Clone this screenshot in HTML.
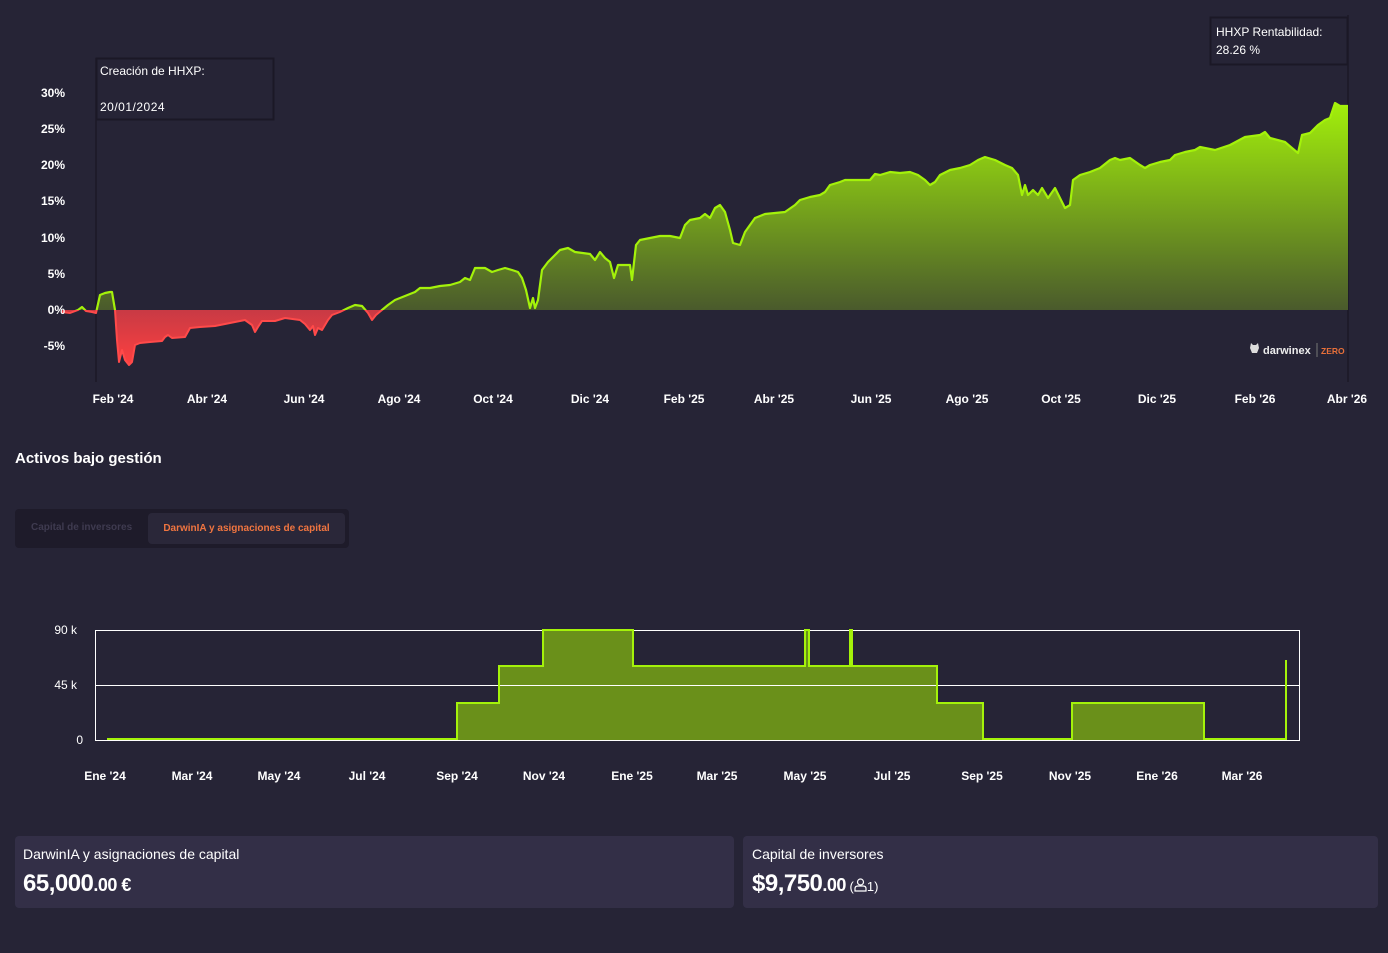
<!DOCTYPE html>
<html><head><meta charset="utf-8"><style>
html,body{margin:0;padding:0;background:#262436;width:1388px;height:953px;overflow:hidden;font-family:"Liberation Sans",sans-serif;color:#fff}
.ax{font-weight:bold;font-size:12px;fill:#fff;font-family:"Liberation Sans",sans-serif}
.t{position:absolute}
</style></head><body>
<svg width="1388" height="430" style="position:absolute;left:0;top:0">
<defs>
<linearGradient id="g" x1="0" y1="100" x2="0" y2="310" gradientUnits="userSpaceOnUse"><stop offset="0" stop-color="#a4f20a"/><stop offset="1" stop-color="#4a5a2c"/></linearGradient>
<linearGradient id="r" x1="0" y1="310" x2="0" y2="366" gradientUnits="userSpaceOnUse"><stop offset="0" stop-color="#c83a44"/><stop offset="1" stop-color="#ff4040"/></linearGradient>
<clipPath id="up"><rect x="0" y="0" width="1388" height="310"/></clipPath>
<clipPath id="dn"><rect x="0" y="310" width="1388" height="100"/></clipPath>
<path id="a" d="M62,312 L70,313 78,310 82,307 86,311 92,312 96,313 100,295 105,293 110,292 112,292 115,310 117,340 119,362 122,350 125,360 129,365 132,362 135,345 140,343 150,342 162,341 165,337 168,335 172,338 185,337 190,328 200,327 215,326 230,323 245,320 252,325 255,332 258,327 262,321 275,321 285,318 300,320 305,324 310,330 313,326 315,335 318,328 322,330 328,320 332,315 340,312 348,308 355,305 362,306 368,313 372,320 376,315 382,310 388,305 395,300 405,296 415,292 420,288 430,288 440,286 450,285 460,282 465,278 470,280 475,268 485,268 492,272 498,270 505,268 512,270 518,272 522,278 526,290 530,308 533,298 535,308 538,300 542,270 548,262 555,255 560,250 568,248 575,252 590,254 595,260 600,252 605,258 610,262 614,278 618,265 625,265 630,265 632,280 636,245 640,240 650,238 660,236 670,236 680,238 685,225 690,220 700,218 705,214 710,218 715,208 720,205 725,212 730,230 733,243 740,245 745,232 750,225 755,218 765,214 775,213 785,212 795,205 800,200 810,197 820,195 825,192 830,185 840,182 845,180 870,180 875,174 880,175 890,172 900,173 910,172 918,175 925,180 930,185 935,182 940,175 950,170 960,168 970,165 978,160 985,157 995,160 1005,165 1012,168 1018,175 1022,195 1025,185 1028,195 1033,190 1038,195 1042,188 1048,198 1055,188 1060,198 1065,208 1070,205 1073,180 1080,175 1090,172 1100,168 1110,160 1115,158 1120,160 1130,158 1140,165 1145,168 1150,165 1160,162 1170,160 1175,155 1185,152 1195,150 1200,147 1215,150 1230,145 1245,137 1260,135 1265,132 1270,138 1285,142 1292,148 1298,153 1302,135 1310,133 1318,125 1325,120 1330,118 1335,103 1340,106 1348,106"/>
</defs>
<line x1="96" y1="58" x2="96" y2="382" stroke="#1b1826" stroke-width="1.5"/>
<line x1="1348" y1="15" x2="1348" y2="382" stroke="#1b1826" stroke-width="1.5"/>
<path clip-path="url(#up)" fill="url(#g)" d="M62,310 L62,312 70,313 78,310 82,307 86,311 92,312 96,313 100,295 105,293 110,292 112,292 115,310 340,312 348,308 355,305 362,306 368,313 376,315 382,310 388,305 395,300 405,296 415,292 420,288 430,288 440,286 450,285 460,282 465,278 470,280 475,268 485,268 492,272 498,270 505,268 512,270 518,272 522,278 526,290 530,308 533,298 535,308 538,300 542,270 548,262 555,255 560,250 568,248 575,252 590,254 595,260 600,252 605,258 610,262 614,278 618,265 625,265 630,265 632,280 636,245 640,240 650,238 660,236 670,236 680,238 685,225 690,220 700,218 705,214 710,218 715,208 720,205 725,212 730,230 733,243 740,245 745,232 750,225 755,218 765,214 775,213 785,212 795,205 800,200 810,197 820,195 825,192 830,185 840,182 845,180 870,180 875,174 880,175 890,172 900,173 910,172 918,175 925,180 930,185 935,182 940,175 950,170 960,168 970,165 978,160 985,157 995,160 1005,165 1012,168 1018,175 1022,195 1025,185 1028,195 1033,190 1038,195 1042,188 1048,198 1055,188 1060,198 1065,208 1070,205 1073,180 1080,175 1090,172 1100,168 1110,160 1115,158 1120,160 1130,158 1140,165 1145,168 1150,165 1160,162 1170,160 1175,155 1185,152 1195,150 1200,147 1215,150 1230,145 1245,137 1260,135 1265,132 1270,138 1285,142 1292,148 1298,153 1302,135 1310,133 1318,125 1325,120 1330,118 1335,103 1340,106 1348,106 1348,310 Z"/>
<path clip-path="url(#dn)" fill="url(#r)" d="M62,310 L62,312 70,313 78,310 82,307 86,311 92,312 96,313 100,295 105,293 110,292 112,292 115,310 117,340 119,362 122,350 125,360 129,365 132,362 135,345 140,343 150,342 162,341 165,337 168,335 172,338 185,337 190,328 200,327 215,326 230,323 245,320 252,325 255,332 258,327 262,321 275,321 285,318 300,320 305,324 310,330 313,326 315,335 318,328 322,330 328,320 332,315 340,312 348,308 355,305 362,306 368,313 372,320 376,315 382,310 388,305 Z"/>
<use href="#a" clip-path="url(#up)" fill="none" stroke="#a4f20a" stroke-width="2.2" stroke-linejoin="round"/>
<use href="#a" clip-path="url(#dn)" fill="none" stroke="#ff4a4a" stroke-width="2" stroke-linejoin="round"/>
<g class="ax" text-anchor="end">
<text x="65" y="97">30%</text><text x="65" y="133">25%</text><text x="65" y="169">20%</text><text x="65" y="205">15%</text><text x="65" y="242">10%</text><text x="65" y="278">5%</text><text x="65" y="314">0%</text><text x="65" y="350">-5%</text>
</g>
<g class="ax" text-anchor="middle">
<text x="113" y="403">Feb '24</text><text x="207" y="403">Abr '24</text><text x="304" y="403">Jun '24</text><text x="399" y="403">Ago '24</text><text x="493" y="403">Oct '24</text><text x="590" y="403">Dic '24</text><text x="684" y="403">Feb '25</text><text x="774" y="403">Abr '25</text><text x="871" y="403">Jun '25</text><text x="967" y="403">Ago '25</text><text x="1061" y="403">Oct '25</text><text x="1157" y="403">Dic '25</text><text x="1255" y="403">Feb '26</text><text x="1347" y="403">Abr '26</text>
</g>
<rect x="96.5" y="58.5" width="177" height="61" fill="#262436" stroke="#1b1826" stroke-width="2"/>
<text x="100" y="75" font-size="12" fill="#fff">Creación de HHXP:</text>
<text x="100" y="111" font-size="12" fill="#fff" letter-spacing="0.5">20/01/2024</text>
<rect x="1210.5" y="17.5" width="137" height="47" fill="#262436" stroke="#1b1826" stroke-width="2"/>
<text x="1216" y="36" font-size="12" fill="#fff">HHXP Rentabilidad:</text>
<text x="1216" y="54" font-size="12" fill="#fff">28.26 %</text>
<g transform="translate(1250,343)"><path d="M1,0 L3,2 6,2 8,0 9,5 7,10 2,10 0,5Z" fill="#ddd"/></g>
<text x="1263" y="354" font-size="11" font-weight="bold" fill="#eee">darwinex</text>
<line x1="1317" y1="343" x2="1317" y2="357" stroke="#777"/>
<text x="1321" y="354" font-size="8.5" font-weight="bold" fill="#e8703a">ZERO</text>
</svg>

<div class="t" style="left:15px;top:450px;font-size:15px;font-weight:bold;color:#fff">Activos bajo gestión</div>
<div class="t" style="left:15px;top:509px;width:334px;height:39px;background:#1e1b2a;border-radius:4px"></div>
<div class="t" style="left:31px;top:522px;font-size:10px;font-weight:bold;color:#3f3b50">Capital de inversores</div>
<div class="t" style="left:148px;top:513px;width:197px;height:31px;background:#2a2739;border-radius:4px;font-size:10px;font-weight:bold;color:#f07540;line-height:31px;text-align:center">DarwinIA y asignaciones de capital</div>

<svg width="1388" height="170" style="position:absolute;left:0;top:620px">
<g transform="translate(0,-620)">
<path d="M457,740 L457,703 499,703 499,666 543,666 543,630 633,630 633,666 805,666 805,630 809,630 809,666 850,666 850,630 852,630 852,666 937,666 937,703 983,703 983,740Z M1072,740 L1072,703 1204,703 1204,740Z" fill="#6a901a"/>
<line x1="95" y1="630.5" x2="1299" y2="630.5" stroke="#fff"/>
<line x1="95" y1="685.5" x2="1299" y2="685.5" stroke="#fff"/>
<line x1="95" y1="740.5" x2="1299" y2="740.5" stroke="#fff"/>
<line x1="95.5" y1="630" x2="95.5" y2="741" stroke="#fff"/>
<line x1="1299.5" y1="630" x2="1299.5" y2="741" stroke="#fff"/>
<path d="M107,739 L457,739 457,703 499,703 499,666 543,666 543,630 633,630 633,666 805,666 805,630 809,630 809,666 850,666 850,630 852,630 852,666 937,666 937,703 983,703 983,739 1072,739 1072,703 1204,703 1204,739 1286,739 1286,660" fill="none" stroke="#a4f20a" stroke-width="2"/>
<g font-size="12" fill="#fff" text-anchor="end"><text x="77" y="634">90 k</text><text x="77" y="689">45 k</text><text x="83" y="744">0</text></g>
<g class="ax" text-anchor="middle">
<text x="105" y="780">Ene '24</text><text x="192" y="780">Mar '24</text><text x="279" y="780">May '24</text><text x="367" y="780">Jul '24</text><text x="457" y="780">Sep '24</text><text x="544" y="780">Nov '24</text><text x="632" y="780">Ene '25</text><text x="717" y="780">Mar '25</text><text x="805" y="780">May '25</text><text x="892" y="780">Jul '25</text><text x="982" y="780">Sep '25</text><text x="1070" y="780">Nov '25</text><text x="1157" y="780">Ene '26</text><text x="1242" y="780">Mar '26</text>
</g></g></svg>

<div class="t" style="left:15px;top:836px;width:719px;height:72px;background:#332f47;border-radius:4px"></div>
<div class="t" style="left:743px;top:836px;width:635px;height:72px;background:#332f47;border-radius:4px"></div>
<div class="t" style="left:23px;top:846px;font-size:14px;color:#fff">DarwinIA y asignaciones de capital</div>
<div class="t" style="left:23px;top:870px;font-size:24px;font-weight:bold;color:#fff;letter-spacing:-0.5px">65,000<span style="font-size:18px">.00 €</span></div>
<div class="t" style="left:752px;top:846px;font-size:14px;color:#fff">Capital de inversores</div>
<div class="t" style="left:752px;top:870px;font-size:24px;font-weight:bold;color:#fff;letter-spacing:-0.5px">$9,750<span style="font-size:18px">.00</span><span style="font-size:13px;font-weight:normal;letter-spacing:0"> (<svg width="13" height="14" viewBox="0 0 13 14" style="vertical-align:-1px"><circle cx="6.5" cy="4" r="3" fill="none" stroke="#fff" stroke-width="1.2"/><path d="M1,13 L1,10.5 Q1,8 4,8 L9,8 Q12,8 12,10.5 L12,13Z" fill="none" stroke="#fff" stroke-width="1.2"/></svg>1)</span></div>
</body></html>
